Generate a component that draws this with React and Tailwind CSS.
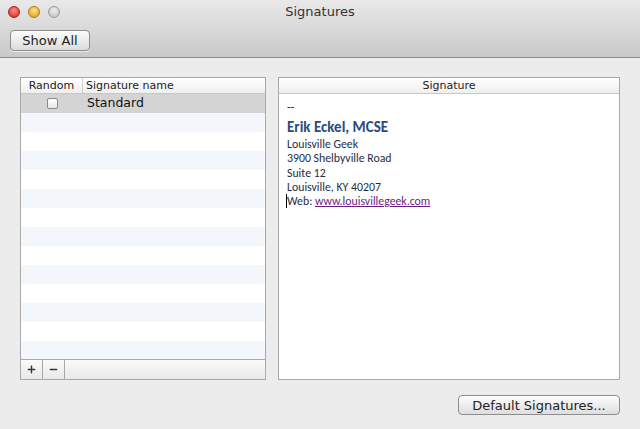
import { Plus, Minus } from "lucide-react";

const ui = { fontFamily: '"Lucida Grande", "DejaVu Sans", sans-serif' };
const sig = { fontFamily: 'Calibri, "Open Sans", "Liberation Sans", sans-serif' };

const EMPTY_ROWS = 13;

function Light({ cls }) {
  return <span className={`block w-[12px] h-[12px] rounded-full border ${cls}`} />;
}

export default function App() {
  return (
    <div className="w-[640px] h-[429px] bg-[#ececec] flex flex-col text-[#111]" style={ui}>
      {/* title bar + toolbar */}
      <div className="h-[58px] shrink-0 bg-gradient-to-b from-[#e9e9e9] to-[#c9c9c9] border-b border-[#8a8a8a] flex flex-col">
        <div className="relative h-[23px] flex items-center px-[8px] gap-[8px]">
          <Light cls="bg-[radial-gradient(circle_at_50%_35%,#ff8a80,#d6251b)] border-[#a2201a]" />
          <Light cls="bg-[radial-gradient(circle_at_50%_35%,#ffe08a,#d99a10)] border-[#b07a10]" />
          <Light cls="bg-[radial-gradient(circle_at_50%_35%,#f0f0f0,#b9b9b9)] border-[#9a9a9a]" />
          <div className="absolute inset-0 flex items-center justify-center text-[13px] text-[#333] pointer-events-none">
            Signatures
          </div>
        </div>
        <div className="px-[10px] pt-[5px]">
          <button className="w-[80px] h-[21px] rounded-[4px] border border-[#8d8d8d] bg-gradient-to-b from-[#fdfdfd] to-[#dcdcdc] text-[13px] text-[#222] shadow-[0_1px_0_rgba(255,255,255,0.6)]">
            Show All
          </button>
        </div>
      </div>

      {/* panes */}
      <div className="flex gap-[12px] ml-[20px] mt-[19px] h-[303px] shrink-0">
        <div className="w-[246px] h-full border border-[#a9a9a9] bg-white flex flex-col">
          <div className="h-[16px] shrink-0 flex text-[11px] leading-[16px] text-[#222] bg-gradient-to-b from-white to-[#efefef] border-b border-[#c7c7c7]">
            <div className="w-[62px] text-center border-r border-[#d0d0d0]">Random</div>
            <div className="pl-[3px]">Signature name</div>
          </div>
          <div className="h-[19px] shrink-0 bg-[#d4d4d4] flex items-center">
            <div className="w-[62px] flex justify-center">
              <span className="block w-[11px] h-[11px] rounded-[2px] border border-[#8a8a8a] bg-gradient-to-b from-white to-[#e8e8e8]" />
            </div>
            <div className="pl-[4px] text-[12.5px] text-[#111]">Standard</div>
          </div>
          <div className="flex-1 overflow-hidden">
            {Array.from({ length: EMPTY_ROWS }).map((_, i) => (
              <div key={i} className={`h-[19px] ${i % 2 === 0 ? "bg-[#f3f6fa]" : "bg-white"}`} />
            ))}
          </div>
          <div className="h-[20px] shrink-0 flex border-t border-[#a9a9a9] bg-gradient-to-b from-[#fafafa] to-[#e9e9e9]">
            <div className="w-[22px] flex items-center justify-center border-r border-[#a9a9a9]">
              <Plus size={11} strokeWidth={3} className="text-[#333]" />
            </div>
            <div className="w-[22px] flex items-center justify-center border-r border-[#a9a9a9]">
              <Minus size={11} strokeWidth={3} className="text-[#333]" />
            </div>
          </div>
        </div>

        <div className="w-[342px] h-full border border-[#a9a9a9] bg-white flex flex-col">
          <div className="h-[16px] shrink-0 text-center text-[11px] leading-[16px] text-[#222] bg-gradient-to-b from-white to-[#efefef] border-b border-[#c7c7c7]">
            Signature
          </div>
          <div className="pl-[8px] pt-[6px] text-[11.8px] leading-[14.2px] text-[#1f2d44]" style={sig}>
            <div className="text-[#222]">--</div>
            <div className="text-[15px] leading-[19px] font-bold text-[#2b4a7e] mt-[4px]">Erik Eckel, MCSE</div>
            <div>Louisville Geek</div>
            <div>3900 Shelbyville Road</div>
            <div>Suite 12</div>
            <div>Louisville, KY 40207</div>
            <div className="border-l border-black -ml-[1px]">
              Web: <span className="text-[#6b1c86] underline">www.louisvillegeek.com</span>
            </div>
          </div>
        </div>
      </div>

      {/* bottom button */}
      <div className="flex justify-end pr-[20px] pt-[15px]">
        <button className="w-[162px] h-[20px] rounded-[4px] border border-[#8d8d8d] bg-gradient-to-b from-[#fdfdfd] to-[#dedede] text-[13px] text-[#222]">
          Default Signatures...
        </button>
      </div>
    </div>
  );
}
